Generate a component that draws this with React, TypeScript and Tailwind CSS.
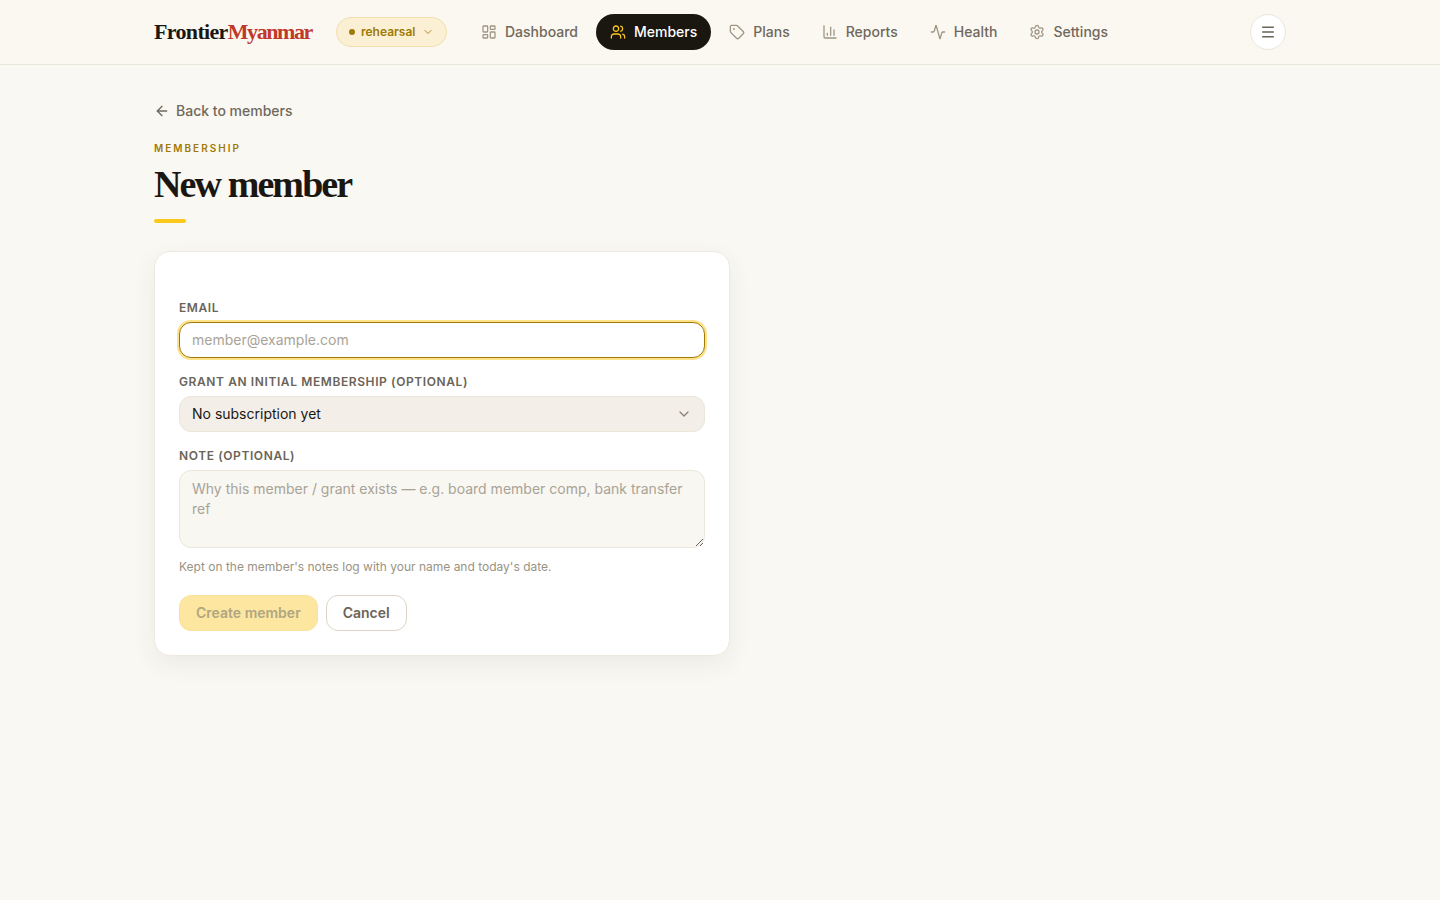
import { Activity, ArrowLeft, ChartColumn, ChevronDown, LayoutDashboard, Menu, Settings, Tag, Users } from 'lucide-react';

const navItems = [
  { label: 'Dashboard', icon: LayoutDashboard },
  { label: 'Members', icon: Users, active: true },
  { label: 'Plans', icon: Tag },
  { label: 'Reports', icon: ChartColumn },
  { label: 'Health', icon: Activity },
  { label: 'Settings', icon: Settings },
];

const labelClass = 'block h-4 text-xs leading-4 font-semibold tracking-[0.05em] uppercase text-[#6b6458]';

export default function App() {
  return (
    <div className="min-h-[900px] bg-[#faf8f3] font-['Inter','Liberation_Sans',sans-serif] text-[#1a1712]">
      <header className="h-[65px] border-b border-[#ebe6da] bg-[#fbf8f1]">
        <div className="mx-auto flex h-16 max-w-[1180px] items-center px-6">
          <a className="w-[158px] whitespace-nowrap font-['Liberation_Serif',serif] text-[22px] leading-none font-bold tracking-[-0.03em]">
            Frontier<span className="tracking-[-0.065em] text-[#c0392b]">Myanmar</span>
          </a>
          <button type="button" className="ml-6 flex h-[30px] w-[111px] items-center rounded-full border border-[#f0dfae] bg-[#fbf0d3] pl-3 text-xs font-semibold text-[#a07a08]">
            <span className="h-1.5 w-1.5 rounded-full bg-[#a07a08]" />
            <span className="ml-1.5">rehearsal</span>
            <ChevronDown className="ml-[7px] h-3 w-3 text-[#b08a2e]" />
          </button>
          <nav className="ml-5 flex items-center gap-1">
            {navItems.map(({ label, icon: Icon, active }) => (
              <a
                key={label}
                className={`flex h-9 items-center gap-2 rounded-full px-3.5 text-sm font-medium ${
                  active ? 'bg-[#1a1610] text-white' : 'text-[#6f685c]'
                }`}
              >
                <Icon className={`h-4 w-4 ${active ? 'text-[#fbc91c]' : 'text-[#9c9484]'}`} strokeWidth={1.9} />
                {label}
              </a>
            ))}
          </nav>
          <button type="button" className="ml-auto flex h-9 w-9 items-center justify-center rounded-full border border-[#ebe6da] bg-white text-[#6b6458]">
            <Menu className="h-4 w-4" strokeWidth={2.25} />
          </button>
        </div>
      </header>

      <main className="mx-auto max-w-[1180px] px-6 pt-9">
        <a className="flex h-5 items-center gap-1.5 text-sm font-medium text-[#6f685c]">
          <ArrowLeft className="h-4 w-4" />
          Back to members
        </a>
        <p className="mt-5 text-[10px] leading-[15px] font-semibold tracking-[0.2em] uppercase text-[#a07a08]">Membership</p>
        <h1 className="mt-2 font-['Liberation_Serif',serif] text-[38px] leading-[40px] font-bold tracking-[-0.05em]">New member</h1>
        <div className="mt-[15px] h-1 w-8 rounded-full bg-[#fbc91c]" />

        <form className="mt-7 flex w-[576px] flex-col rounded-2xl border border-[#efeadf] bg-white px-6 pt-12 pb-6 shadow-[0_8px_24px_rgba(60,50,30,0.07)]">
          <label className={labelClass}>Email</label>
          <input
            placeholder="member@example.com"
            className="mt-1.5 h-9 rounded-xl border border-[#a07a08] bg-white px-3 pb-px text-sm shadow-[0_0_0_2px_#fde28a] outline-none placeholder:text-[#a8a397]"
          />
          <label className={`${labelClass} mt-4`}>Grant an initial membership (optional)</label>
          <div className="mt-1.5 flex h-9 items-center justify-between rounded-xl border border-[#ebe6da] bg-[#f3efe8] px-3 text-sm">
            No subscription yet
            <ChevronDown className="h-4 w-4 text-[#8a8373]" />
          </div>
          <label className={`${labelClass} mt-4`}>Note (optional)</label>
          <textarea
            rows={2}
            placeholder="Why this member / grant exists — e.g. board member comp, bank transfer ref"
            className="mt-1.5 h-[78px] rounded-xl border border-[#ebe6da] bg-[#f9f7f2] px-3 py-2 text-sm leading-5 outline-none placeholder:text-[#a8a397]"
          />
          <p className="mt-[11px] text-xs leading-4 text-[#9a9383]">Kept on the member's notes log with your name and today's date.</p>
          <div className="mt-5 flex gap-2">
            <button type="button" disabled className="h-9 rounded-xl border border-[#fbe29a] bg-[#fde6a0] px-4 text-sm font-semibold text-[#b0a680]">
              Create member
            </button>
            <button type="button" className="h-9 rounded-xl border border-[#dcd5c7] bg-white px-4 text-sm font-semibold text-[#6b6458]">
              Cancel
            </button>
          </div>
        </form>
      </main>
    </div>
  );
}
